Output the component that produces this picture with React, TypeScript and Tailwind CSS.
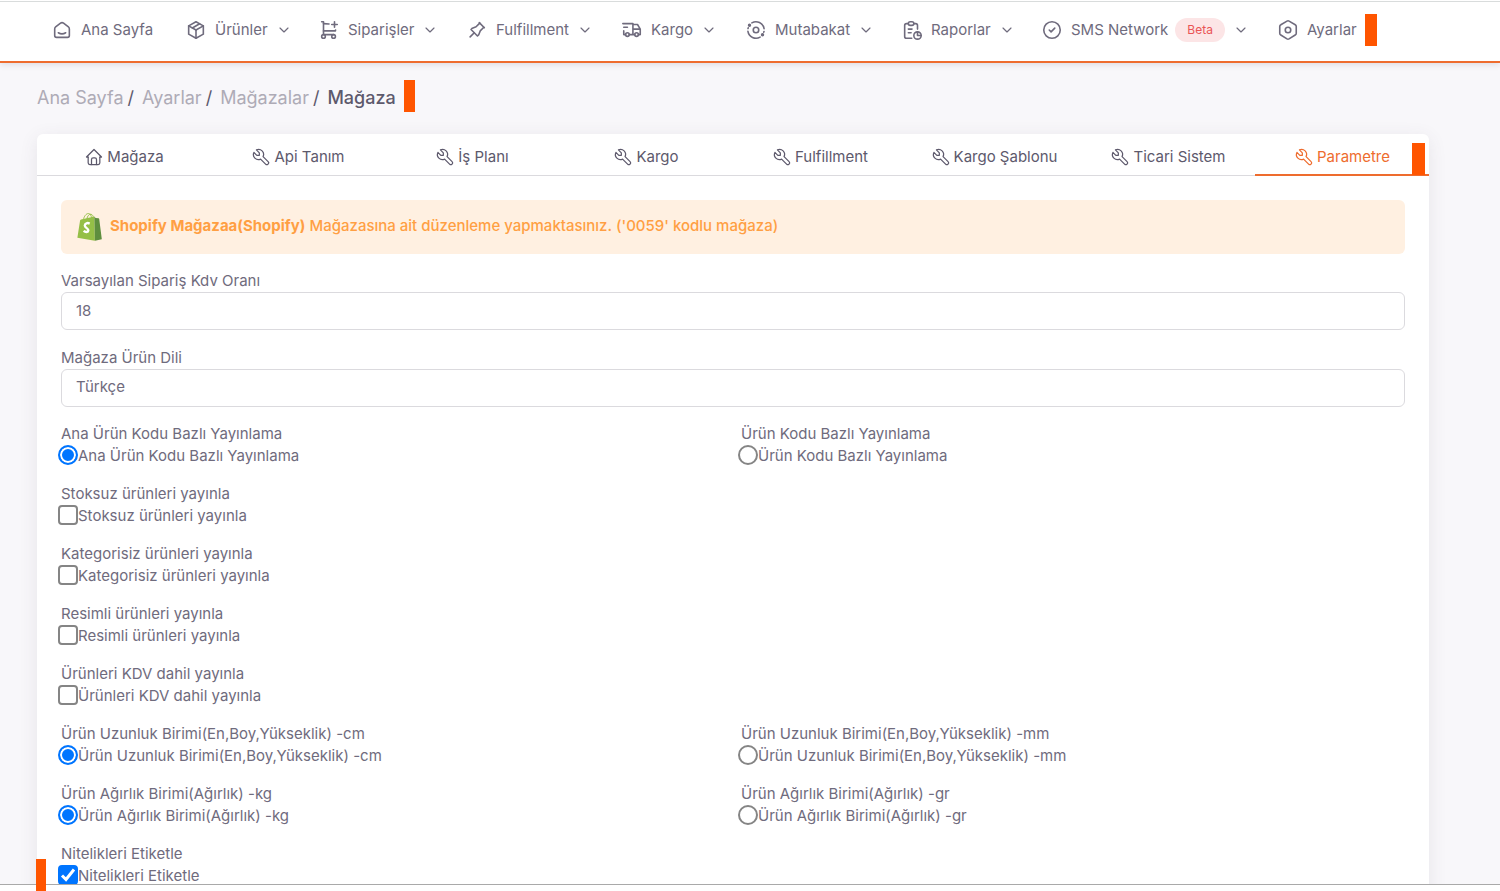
import React from "react";
import {
  TbSmartHome,
  TbPackage,
  TbPin,
  TbTruckDelivery,
  TbReport,
  TbCircleCheck,
  TbChevronDown,
  TbHome,
  TbTool,
} from "react-icons/tb";

type IconProps = { className?: string };

function CartPlusIcon({ className }: IconProps) {
  return (
    <svg viewBox="0 0 24 24" className={className} fill="none" stroke="currentColor" strokeWidth="1.75" strokeLinecap="round" strokeLinejoin="round">
      <circle cx="6" cy="19" r="2" />
      <circle cx="17" cy="19" r="2" />
      <path d="M17 17H6V3H4" />
      <path d="M6 5l6.005 .429m7.138 6.573l-.143 .998H6" />
      <path d="M15 6h6m-3 -3v6" />
    </svg>
  );
}

function OrbitIcon({ className }: IconProps) {
  return (
    <svg viewBox="0 0 24 24" className={className} fill="none" stroke="currentColor" strokeWidth="1.75" strokeLinecap="round" strokeLinejoin="round">
      <circle cx="12" cy="12" r="3" />
      <path d="M7.500 4.200a9 9 0 0 1 13.300 6.300" />
      <path d="M3.200 13.500a9 9 0 0 0 13.300 6.300" />
      <path d="M3.300 10.400l.2-.7M20.700 13.600l-.2.7" />
      <circle cx="4.900" cy="6.800" r="1" fill="currentColor" />
      <circle cx="19.100" cy="17.200" r="1" fill="currentColor" />
    </svg>
  );
}

function HexagonIcon({ className }: IconProps) {
  return (
    <svg viewBox="0 0 24 24" className={className} fill="none" stroke="currentColor" strokeWidth="1.75" strokeLinecap="round" strokeLinejoin="round">
      <path d="M19.875 6.27a2.225 2.225 0 0 1 1.125 1.948v7.284c0 .809 -.443 1.555 -1.158 1.948l-6.75 4.27a2.269 2.269 0 0 1 -2.184 0l-6.75 -4.27a2.225 2.225 0 0 1 -1.158 -1.948v-7.285c0 -.809 .443 -1.554 1.158 -1.947l6.75 -3.98a2.33 2.33 0 0 1 2.25 0l6.75 3.98z" />
      <circle cx="12" cy="12" r="3" />
    </svg>
  );
}

function ShopifyLogo({ className }: IconProps) {
  return (
    <svg viewBox="0 0 26 30" className={className} fill="none" aria-hidden="true">
      <path d="M6.6 7.6C7.4 3.6 9.6 1 11.8 1c2.2 0 3.2 2.2 3.3 5.2M10.2 6.6C10.8 3.6 12.6 1.6 14.4 1.7c1.6.2 2.4 1.8 2.7 3.9" stroke="#95bf47" strokeWidth="1" />
      <path d="M3.2 8.3Q3.300 7.400 4.200 7.100L18 4.200l.6 25.200L.4 26.200z" fill="#95bf47" />
      <path d="M18 4.200l1.400 1.400 3 .3q.6.1.7.700L25.800 27.800l-7.200 1.600z" fill="#5e8e3e" />
      <path d="M13.200 11.400c-2.200-1-5-.4-5.100 2 0 2.600 3.900 2.900 3.700 5.200-.2 2.100-3 2.100-4.900.5" stroke="#fff" strokeWidth="2.500" />
    </svg>
  );
}

const navItems = [
  { label: "Ana Sayfa", Icon: TbSmartHome, menu: false },
  { label: "Ürünler", Icon: TbPackage, menu: true },
  { label: "Siparişler", Icon: CartPlusIcon, menu: true },
  { label: "Fulfillment", Icon: TbPin, menu: true },
  { label: "Kargo", Icon: TbTruckDelivery, menu: true },
  { label: "Mutabakat", Icon: OrbitIcon, menu: true },
  { label: "Raporlar", Icon: TbReport, menu: true },
  { label: "SMS Network", Icon: TbCircleCheck, menu: true, badge: "Beta" },
  { label: "Ayarlar", Icon: HexagonIcon, menu: false, marked: true },
];

const tabs = [
  { label: "Mağaza", Icon: TbHome },
  { label: "Api Tanım", Icon: TbTool },
  { label: "İş Planı", Icon: TbTool },
  { label: "Kargo", Icon: TbTool },
  { label: "Fulfillment", Icon: TbTool },
  { label: "Kargo Şablonu", Icon: TbTool },
  { label: "Ticari Sistem", Icon: TbTool },
  { label: "Parametre", Icon: TbTool, active: true },
];

type Option = { label: string; type: "radio" | "checkbox"; checked?: boolean; name?: string };

const optionRows: Option[][] = [
  [
    { label: "Ana Ürün Kodu Bazlı Yayınlama", type: "radio", name: "publish", checked: true },
    { label: "Ürün Kodu Bazlı Yayınlama", type: "radio", name: "publish" },
  ],
  [{ label: "Stoksuz ürünleri yayınla", type: "checkbox" }],
  [{ label: "Kategorisiz ürünleri yayınla", type: "checkbox" }],
  [{ label: "Resimli ürünleri yayınla", type: "checkbox" }],
  [{ label: "Ürünleri KDV dahil yayınla", type: "checkbox" }],
  [
    { label: "Ürün Uzunluk Birimi(En,Boy,Yükseklik) -cm", type: "radio", name: "length", checked: true },
    { label: "Ürün Uzunluk Birimi(En,Boy,Yükseklik) -mm", type: "radio", name: "length" },
  ],
  [
    { label: "Ürün Ağırlık Birimi(Ağırlık) -kg", type: "radio", name: "weight", checked: true },
    { label: "Ürün Ağırlık Birimi(Ağırlık) -gr", type: "radio", name: "weight" },
  ],
  [{ label: "Nitelikleri Etiketle", type: "checkbox", checked: true }],
];

function OptionField({ option, id }: { option: Option; id: string }) {
  return (
    <div>
      <p>{option.label}</p>
      <div className="-ml-[3px] flex items-start">
        <span className="grid size-5 shrink-0 place-items-center">
          <input
            id={id}
            type={option.type}
            name={option.name ?? id}
            defaultChecked={option.checked}
            className={
              option.type === "radio"
                ? "peer col-start-1 row-start-1 size-5 appearance-none rounded-full border-2 border-[#858585] bg-white checked:border-[#0075ff] checked:bg-[#0075ff] checked:shadow-[inset_0_0_0_2px_white]"
                : "peer col-start-1 row-start-1 size-5 appearance-none rounded border-2 border-[#858585] bg-white checked:border-[#0075ff] checked:bg-[#0075ff]"
            }
          />
          {option.type === "checkbox" && (
            <svg viewBox="0 0 20 20" className="pointer-events-none invisible col-start-1 row-start-1 size-5 peer-checked:visible" fill="none" stroke="#fff" strokeWidth="3">
              <path d="M4 10.500l4 4L16 4.500" />
            </svg>
          )}
        </span>
        <label htmlFor={id}>{option.label}</label>
      </div>
    </div>
  );
}

function Header() {
  return (
    <header className="relative z-10 shrink-0 border-b-2 border-[#ee6c2e] bg-white pt-px shadow-[0_2px_6px_rgba(75,70,92,0.14)]">
      <nav className="grid h-[60px] grid-cols-[134px_133px_148px_155px_124px_156px_140px_236px_auto] items-center border-t border-[#d9dcdc] pb-[3px] pl-[51px]">
        {navItems.map(({ label, Icon, menu, badge, marked }) => (
          <a key={label} href="#" className="flex items-center whitespace-nowrap">
            <Icon className="mr-2 size-[22px] shrink-0 stroke-[1.75]" />
            <span>{label}</span>
            {badge && <span className="ml-[7px] rounded-full bg-[#fce5e6] px-3 text-xs leading-6 text-[#ea5455]">{badge}</span>}
            {menu && <TbChevronDown className="ml-2 size-4 shrink-0 stroke-[1.75]" />}
            {marked && <span className="ml-2 h-8 w-3 bg-[#ff5500]" />}
          </a>
        ))}
      </nav>
    </header>
  );
}

export default function App() {
  return (
    <div className="relative flex h-screen flex-col overflow-hidden bg-[#f8f7fa] font-['Inter','Noto_Sans',sans-serif] text-[15px] leading-[22px] text-[#6f6b7d]">
      <Header />
      <main className="min-h-0 flex-1 overflow-hidden pt-[17px] pr-[71px] pl-[37px]">
        <div className="mb-[22px] flex h-8 items-center text-lg">
          <ol className="flex items-center pt-1 text-[#5d596c]">
            {["Ana Sayfa", "Ayarlar", "Mağazalar"].map((crumb) => (
              <li key={crumb} className="mr-2">
                <a href="#" className="mr-1 text-[#aeabb6]">{crumb}</a>/
              </li>
            ))}
            <li className="font-medium">Mağaza</li>
          </ol>
          <span className="ml-2 h-8 w-[11px] bg-[#ff5500]" />
        </div>

        <section className="rounded-md bg-white pb-8 shadow-[0_4px_18px_rgba(75,70,92,0.1)]">
          <div role="tablist" className="relative grid h-[42px] grid-cols-8 text-[#5d596c]">
            {tabs.map(({ label, Icon, active }) => (
              <button
                key={label}
                type="button"
                role="tab"
                aria-selected={!!active}
                className={
                  active
                    ? "flex items-center justify-center gap-[3px] border-b-2 border-[#ee6c2e] pt-[6px] text-[#ee6c2e]"
                    : "flex items-center justify-center gap-[3px] border-b border-[#dbdade] pt-[5px]"
                }
              >
                <Icon className="size-5 stroke-[1.5]" />
                {label}
              </button>
            ))}
            <span className="absolute right-1 bottom-px h-8 w-[13px] bg-[#ff5500]" />
          </div>

          <div className="px-6 pt-6">
            <div role="alert" className="mb-[15px] flex h-[54px] items-center rounded-md bg-[#fff0e1] px-4 text-[#ff9f43]">
              <ShopifyLogo className="mr-2 h-[30px] w-[25px]" />
              <p className="pb-[2px] font-medium">
                <strong className="font-bold">Shopify Mağazaa(Shopify)</strong> Mağazasına ait düzenleme yapmaktasınız. ('0059' kodlu mağaza)
              </p>
            </div>

            <form className="flex flex-col gap-4">
              <div>
                <label htmlFor="vat" className="block leading-[23px]">Varsayılan Sipariş Kdv Oranı</label>
                <input id="vat" type="text" defaultValue="18" className="block h-[38px] w-full rounded-md border border-[#dbdade] bg-white px-[14px] pb-[2px]" />
              </div>
              <div>
                <label htmlFor="language" className="block leading-[23px]">Mağaza Ürün Dili</label>
                <select id="language" className="block h-[38px] w-full appearance-none rounded-md border border-[#dbdade] bg-white px-[14px] pb-[2px]">
                  <option>Türkçe</option>
                </select>
              </div>
              {optionRows.map((row, r) => (
                <div key={r} className="grid grid-cols-2 gap-4">
                  {row.map((option, c) => (
                    <OptionField key={option.label} option={option} id={`option-${r}-${c}`} />
                  ))}
                </div>
              ))}
            </form>
          </div>
        </section>
      </main>
      <footer className="h-[7px] shrink-0 border-t border-[#a9a9a9] bg-white" />
      <span className="absolute bottom-0 left-9 h-8 w-[10px] bg-[#ff5500]" />
    </div>
  );
}
